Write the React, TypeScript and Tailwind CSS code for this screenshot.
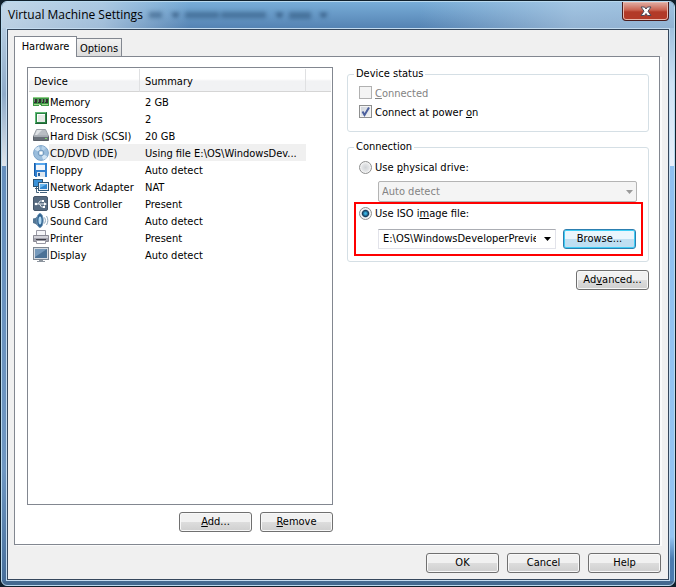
import React, { useState } from 'react';

type IconProps = { className?: string };

const svgProps = { width: 16, height: 16, viewBox: '0 0 16 16', 'aria-hidden': true } as const;

const MemoryIcon = () => (
  <svg {...svgProps} shapeRendering="crispEdges">
    <path d="M0 3h16v9H0z" fill="#3f9a47" />
    <path d="M0 3h16v1H0z" fill="#8ccc86" />
    <path d="M1 5h3v4H1zM5 5h3v4H5zM9 5h2v4H9zM12 5h3v4h-3z" fill="#2e332e" />
    <path d="M1 5h1v3H1zM5 5h1v3H5zM9 5h1v3H9zM12 5h1v3h-1z" fill="#77807a" />
    <path d="M1 10h6v1H1zM9 10h6v1H9z" fill="#a6d890" />
    <path d="M6 11h2v1H6z" fill="#fff" />
  </svg>
);

const ProcessorIcon = () => (
  <svg {...svgProps} shapeRendering="crispEdges">
    <path d="M2 1h12v12H2z" fill="#2b8446" />
    <path d="M2 1h11v1H3v10H2z" fill="#62bb76" />
    <path d="M4 3h8v8H4z" fill="#e6e9e6" />
    <path d="M4 3h8v1H5v7H4z" fill="#fff" />
    <path d="M13 2h1v11H3v-1h10z" fill="#1d6332" />
  </svg>
);

const DiskIcon = () => (
  <svg {...svgProps}>
    <path d="M3.500 1.500h9L15.500 8H.5z" fill="#b9bec4" stroke="#9ba1a8" />
    <path d="M4 2h5L4 7H2z" fill="#dfe2e5" />
    <path d="M.5 8.500h15v4H.5z" fill="#686f78" stroke="#5a6069" />
    <path d="M1 8.500h14" stroke="#a5abb2" />
    <path d="M12 10h2v1h-2z" fill="#7fdc6a" />
  </svg>
);

const DiscIcon = () => (
  <svg {...svgProps}>
    <circle cx="8" cy="8" r="7.400" fill="#9abddc" stroke="#7ba2c8" />
    <path d="M8 8 1.500 4.500A7 7 0 0 1 6 1.200zM8 8l6.500 3.500a7 7 0 0 1-4.500 3.300z" fill="#d3e5f4" />
    <path d="M8 8 9 1a7 7 0 0 1 4 2z" fill="#b6d2ea" />
    <circle cx="8" cy="8" r="2.800" fill="#cfe0ee" stroke="#6d96bd" />
    <circle cx="8" cy="8" r="1.200" fill="#fff" />
  </svg>
);

const FloppyIcon = () => (
  <svg {...svgProps} shapeRendering="crispEdges">
    <path d="M1 1h13v14H2l-1-1z" fill="#2f7fd0" />
    <path d="M1 1h1v13H1z" fill="#185ca6" />
    <path d="M3 1h9v7H3z" fill="#f2f6fb" />
    <path d="M3 1h9v2H3z" fill="#58a6ec" />
    <path d="M4 10h8v5H4z" fill="#dde6ee" />
    <path d="M5 11h2v3H5z" fill="#27609c" />
  </svg>
);

const NetworkIcon = () => (
  <svg {...svgProps}>
    <rect x="0.500" y="0.500" width="9" height="7" fill="#3b92d8" stroke="#2c5475" />
    <path d="M2 9.500h3M3.500 8v5.500H6" stroke="#45637d" fill="none" />
    <rect x="5.500" y="3.500" width="10" height="8" fill="#e6eef5" stroke="#2c5475" />
    <rect x="7" y="5" width="7" height="5" fill="#2f86cf" />
    <path d="M7 5h7l-7 4z" fill="#69b6ee" />
    <path d="M7 13.500h7" stroke="#45637d" />
  </svg>
);

const UsbIcon = () => (
  <svg {...svgProps}>
    <rect x="0.500" y="0.500" width="14" height="14" rx="1.500" fill="#566a80" stroke="#45566a" />
    <path d="M3 8h9M5 8l2-3h2M6.500 8l2 3H10" stroke="#e4e9ee" fill="none" />
    <circle cx="3" cy="8" r="1.300" fill="#fff" />
    <path d="M11 6.300 14 8l-3 1.700zM9 4h2v2H9zM10 10h2v2h-2z" fill="#fff" />
  </svg>
);

const SoundIcon = () => (
  <svg {...svgProps}>
    <path d="M0 5.500 2.500 5 7 .5v14L2.500 11 0 10z" fill="#547694" />
    <ellipse cx="7" cy="7.500" rx="3.200" ry="7" fill="#2e618f" stroke="#6f95b5" />
    <ellipse cx="7" cy="7.500" rx="1.500" ry="4" fill="#b5dcf5" />
    <path d="M11.500 4.500c1.200 2 1.200 4 0 6M13.500 3c1.800 3 1.800 6 0 9" stroke="#8ea6ba" fill="none" />
  </svg>
);

const PrinterIcon = () => (
  <svg {...svgProps}>
    <path d="M3.500.5h9v5h-9z" fill="#f5f5f8" stroke="#9a9aa5" />
    <path d="M.5 5.500h15v6H.5z" fill="#a4a4ae" stroke="#8a8a95" />
    <path d="M1 6h14v2H1z" fill="#d2d2d9" />
    <path d="M3 9.500h10" stroke="#3f3f49" />
    <path d="M3.500 10.500h9v3h-9z" fill="#fff" stroke="#9a9aa5" />
  </svg>
);

const DisplayIcon = () => (
  <svg {...svgProps}>
    <rect x="0.500" y="0.500" width="15" height="12" fill="#d8dde3" stroke="#7f8893" />
    <rect x="2" y="2" width="12" height="9" fill="#4c7296" />
    <path d="M2 2h12L2 10z" fill="#7599bb" />
    <path d="M6 13h4v1h2v1H4v-1h2z" fill="#8d959e" />
  </svg>
);

const CloseIcon = ({ className }: IconProps) => (
  <svg width="12" height="11" viewBox="0 0 12 11" className={className} aria-hidden>
    <path d="M1 1h3.500L6 3 7.500 1H11L8 5.200l3 4.300H7.500L6 7.500l-1.500 2H1l3-4.300z" fill="#fff" stroke="#4b4a5a" />
  </svg>
);

// Menu bar of the window behind, seen through the glass title bar
const GlassBackdrop = () => (
  <svg width="190" height="24" viewBox="0 0 190 24" className="shrink-0 blur-[2px]" aria-hidden>
    <path d="M6 10h13v6H6zM42 10h34v6H42zM78 10h45v6H78zM146 10h22v7h-22z" fill="#31587f" opacity="0.600" />
    <path d="M28 11h9l-4.500 5zM132 11h9l-4.500 5zM176 11h9l-4.500 5z" fill="#1d3f63" opacity="0.800" />
  </svg>
);

const devices = [
  { name: 'Memory', summary: '2 GB', icon: MemoryIcon },
  { name: 'Processors', summary: '2', icon: ProcessorIcon },
  { name: 'Hard Disk (SCSI)', summary: '20 GB', icon: DiskIcon },
  { name: 'CD/DVD (IDE)', summary: 'Using file E:\\OS\\WindowsDev...', icon: DiscIcon },
  { name: 'Floppy', summary: 'Auto detect', icon: FloppyIcon },
  { name: 'Network Adapter', summary: 'NAT', icon: NetworkIcon },
  { name: 'USB Controller', summary: 'Present', icon: UsbIcon },
  { name: 'Sound Card', summary: 'Auto detect', icon: SoundIcon },
  { name: 'Printer', summary: 'Present', icon: PrinterIcon },
  { name: 'Display', summary: 'Auto detect', icon: DisplayIcon },
];

interface PushButtonProps {
  children: React.ReactNode;
  focused?: boolean;
}

const PushButton: React.FC<PushButtonProps> = ({ children, focused }) => (
  <button
    type="button"
    className={`h-5 w-[73px] shrink-0 rounded-[3px] border text-center leading-[18px] ${
      focused
        ? 'border-[#2c7fb0] bg-linear-to-b from-[#eaf6fd] from-50% to-[#bfdff2] to-50% shadow-[inset_0_0_0_1px_#3fcdf5]'
        : 'border-[#707070] bg-linear-to-b from-[#f1f1f1] from-50% via-[#dddddd] via-50% to-[#cfcfcf] shadow-[inset_0_0_0_1px_#f8f8f8]'
    }`}
  >
    {children}
  </button>
);

const DeviceTable = () => {
  const [selected, setSelected] = useState('CD/DVD (IDE)');

  return (
    <div className="min-h-0 flex-1 border border-[#828790] bg-white p-px">
      <table className="w-full table-fixed border-collapse text-left">
        <colgroup>
          <col className="w-[111px]" />
          <col className="w-[166px]" />
          <col />
        </colgroup>
        <thead>
          <tr>
            {['Device', 'Summary', ''].map((title, i) => (
              <th key={i} className="h-6 p-0 align-top font-normal">
                <div
                  className={`flex h-[23px] items-center border-b border-[#d5d5d5] bg-linear-to-b from-white from-45% to-[#f1f2f4] to-55% pt-[3px] pl-[5px] ${
                    i < 2 ? 'border-r border-r-[#dfe0e2]' : ''
                  }`}
                >
                  {title}
                </div>
              </th>
            ))}
          </tr>
        </thead>
        <tbody>
          {devices.map(({ name, summary, icon: Icon }) => {
            const bg = name === selected ? 'bg-[#f0f0f0]' : '';
            return (
              <tr key={name} onClick={() => setSelected(name)}>
                <td className="p-0">
                  <div className="flex h-[17px] items-end pl-1 whitespace-nowrap">
                    <Icon />
                    <span className={`flex-1 pt-[3px] pl-px leading-[14px] ${bg}`}>{name}</span>
                  </div>
                </td>
                <td className={`p-0 pt-[3px] pl-[5px] leading-[14px] whitespace-nowrap ${bg}`}>{summary}</td>
                <td className="p-0"></td>
              </tr>
            );
          })}
        </tbody>
      </table>
    </div>
  );
};

const radioClass =
  'size-[13px] shrink-0 appearance-none rounded-full border border-[#8e8f8f] bg-radial from-[#d0d3d6] to-[#fafafa] shadow-[inset_0_0_0_1px_#f4f4f4] checked:bg-radial checked:from-[#39b4e4] checked:from-10% checked:via-[#143c5c] checked:via-40% checked:to-[#eef2f5] checked:to-55% disabled:border-[#b1b1b1]';

const App: React.FC = () => {
  const [powerOn, setPowerOn] = useState(true);
  const [source, setSource] = useState('iso');

  return (
    <div className="flex min-h-screen flex-col bg-[#10202c] font-['DejaVu_Sans_Condensed','DejaVu_Sans',sans-serif] text-[11px] leading-[14px] text-black">
      <div className="m-px flex flex-1 flex-col rounded-[6px] border border-[#b9d9ee] bg-[#44698f] pb-1">
        <header className="flex h-[26px] items-start rounded-t-[5px] bg-[linear-gradient(to_right,#d3e1edd0,#c2d6e8b0_15%,transparent_28%,transparent_62%,#c3d8eb90_85%,#b5cee5a0),linear-gradient(#78add8,#5583b3)] pr-[5px] pl-1.5">
          <h1 className="pt-1 font-['Open_Sans','Noto_Sans',sans-serif] text-xs leading-[18px] whitespace-nowrap">Virtual Machine Settings</h1>
          <GlassBackdrop />
          <button
            type="button"
            aria-label="Close"
            className="ml-auto flex h-[19px] w-[47px] items-center justify-center rounded-b-[4px] border border-t-0 border-[#4a1c1c] bg-linear-to-b from-[#dc9f94] from-10% via-[#c9614f] via-45% to-[#b23a28] to-55% shadow-[inset_0_0_0_1px_#e8b9ae]"
          >
            <CloseIcon />
          </button>
        </header>

        <div className="flex flex-1">
          <div className="w-1 bg-[linear-gradient(#b4cbe0,#8fabc9_12%,#dfe4ea_25%,#668fbd_25%,#6f97c2_80%,#476f9b)]" />
          <main className="flex flex-1 flex-col border border-[#c4dcf0]">
            <div className="flex flex-1 flex-col border border-[#35475c] bg-[#f0f0f0] px-1.5 pt-1.5 pb-1.5">
              <div role="tablist" className="flex items-end">
                <button type="button" role="tab" aria-selected="true" className="z-10 -mb-px h-[21px] w-[63px] border border-b-0 border-[#828790] bg-white">
                  Hardware
                </button>
                <button type="button" role="tab" aria-selected="false" className="h-[18px] w-[45px] border border-b-0 border-l-0 border-[#828790] bg-linear-to-b from-[#f2f2f2] to-[#dcdcdc] pt-0.5">
                  Options
                </button>
              </div>

              <div role="tabpanel" className="mr-0.5 grid flex-1 grid-cols-[306fr_302fr] gap-x-3.5 border border-[#828790] bg-white pt-2.5 pr-2.5 pb-3 pl-3 shadow-[2px_1px_0_#fbfbfb]">
                <section className="flex flex-col gap-[7px]">
                  <DeviceTable />
                  <div className="flex justify-end gap-2">
                    <PushButton><u>A</u>dd...</PushButton>
                    <PushButton><u>R</u>emove</PushButton>
                  </div>
                </section>

                <section className="flex flex-col">
                  <fieldset className="min-w-0 rounded-[3px] border border-[#d5dfe5] pb-3">
                    <legend className="ml-1.5 px-0.5">Device status</legend>
                    <label className="ml-[11px] flex h-[19px] items-center gap-[3px] pt-1 text-[#838383]">
                      <input type="checkbox" disabled className="size-[13px] appearance-none border border-[#b1b1b1] bg-[#f4f4f4]" />
                      <span className="pt-0.5"><u>C</u>onnected</span>
                    </label>
                    <label className="ml-[11px] flex h-[19px] items-center gap-[3px] pt-1">
                      <span className="grid">
                        <input
                          type="checkbox"
                          checked={powerOn}
                          onChange={e => setPowerOn(e.target.checked)}
                          className="col-start-1 row-start-1 size-[13px] appearance-none border border-[#8e8f8f] bg-linear-to-br from-[#ced3da] to-[#f4f5f6] shadow-[inset_0_0_0_1px_#f4f4f4]"
                        />
                        {powerOn && (
                          <svg width="13" height="13" viewBox="0 0 13 13" className="pointer-events-none col-start-1 row-start-1" aria-hidden>
                            <path d="M3.500 6.500 5.500 10 10 2.500" fill="none" stroke="#4b5f9d" strokeWidth="2" />
                          </svg>
                        )}
                      </span>
                      <span className="pt-0.5">Connect at power <u>o</u>n</span>
                    </label>
                  </fieldset>

                  <fieldset className="mt-2 min-w-0 rounded-[3px] border border-[#d5dfe5] pb-[5px]">
                    <legend className="ml-1.5 px-0.5">Connection</legend>
                    <label className="mt-1 ml-[11px] flex h-[19px] items-center gap-[3px]">
                      <input type="radio" name="source" checked={source === 'drive'} onChange={() => setSource('drive')} className={radioClass} />
                      <span>Use <u>p</u>hysical drive:</span>
                    </label>
                    <div className="mt-1 mr-[11px] ml-[30px] grid">
                      <select
                        aria-label="Physical drive"
                        disabled
                        className="col-start-1 row-start-1 h-[21px] appearance-none rounded-[2px] border border-[#b4b4b4] bg-[#f4f4f4] pl-[3px] text-[#838383] opacity-100"
                      >
                        <option>Auto detect</option>
                      </select>
                      <svg width="7" height="4" viewBox="0 0 7 4" className="pointer-events-none col-start-1 row-start-1 mr-1 self-center justify-self-end" aria-hidden>
                        <path d="M0 0h7L3.500 4z" fill="#9a9a9a" />
                      </svg>
                    </div>

                    <div className="mr-[5px] ml-1.5 border-2 border-[#fe0000] pr-[5px] pb-[5px]">
                      <label className="ml-[3px] flex h-[19px] items-center gap-[3px]">
                        <input type="radio" name="source" checked={source === 'iso'} onChange={() => setSource('iso')} className={radioClass} />
                        <span>Use ISO i<u>m</u>age file:</span>
                      </label>
                      <div className="mt-1.5 ml-[22px] flex gap-[7px]">
                        <div className="flex h-5 min-w-0 flex-1 items-center border border-[#e2e3ea] border-t-[#abadb3] bg-white pr-1">
                          <input aria-label="ISO image file" defaultValue="E:\OS\WindowsDeveloperPreview.iso" className="mr-2 ml-1 min-w-0 flex-1 outline-none" />
                          <svg width="7" height="4" viewBox="0 0 7 4" aria-hidden>
                            <path d="M0 0h7L3.500 4z" fill="#000" />
                          </svg>
                        </div>
                        <PushButton focused>Browse...</PushButton>
                      </div>
                    </div>
                  </fieldset>

                  <div className="mt-2 flex justify-end">
                    <PushButton>Ad<u>v</u>anced...</PushButton>
                  </div>
                </section>
              </div>

              <footer className="mt-2 mr-px flex justify-end gap-2">
                <PushButton>OK</PushButton>
                <PushButton>Cancel</PushButton>
                <PushButton>Help</PushButton>
              </footer>
            </div>
          </main>
          <div className="w-1 bg-[linear-gradient(#9fc0de,#cde2f5_10%,#e8f0fb_25%,#8fc0f0_25%,#94c4f2_92%,#4b7cb0_96%)]" />
        </div>
      </div>
    </div>
  );
};

export default App;
